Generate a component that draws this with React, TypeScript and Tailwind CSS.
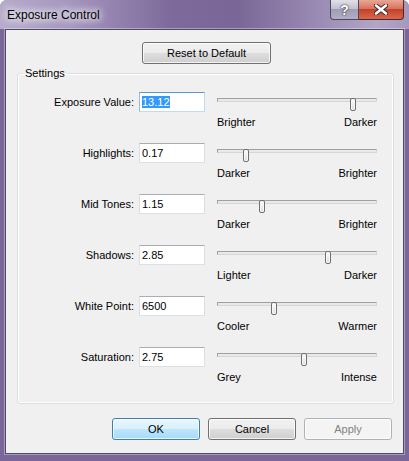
import React from "react";

type Setting = {
  label: string;
  value: string;
  thumb: number; // thumb offset along the 160px track
  low: string;
  high: string;
};

const settings: Setting[] = [
  { label: "Exposure Value:", value: "13.12", thumb: 133, low: "Brighter", high: "Darker" },
  { label: "Highlights:", value: "0.17", thumb: 26, low: "Darker", high: "Brighter" },
  { label: "Mid Tones:", value: "1.15", thumb: 42, low: "Darker", high: "Brighter" },
  { label: "Shadows:", value: "2.85", thumb: 108, low: "Lighter", high: "Darker" },
  { label: "White Point:", value: "6500", thumb: 54, low: "Cooler", high: "Warmer" },
  { label: "Saturation:", value: "2.75", thumb: 84, low: "Grey", high: "Intense" },
];

const btn =
  "h-[22px] rounded-[3px] border text-[11px] leading-[20px] shadow-[inset_0_0_0_1px_rgba(255,255,255,0.75)]";
const btnNormal =
  "border-[#707070] text-black bg-[linear-gradient(#f2f2f2_0%,#ebebeb_50%,#dddddd_51%,#cfcfcf_100%)]";

function TextBox({ value, focused }: { value: string; focused?: boolean }) {
  return (
    <div
      className={
        "ml-[5px] h-[20px] w-[66px] border bg-white pl-[2px] leading-[18px] " +
        (focused
          ? "border-[#c5daed] border-t-[#5a9ad6] border-l-[#8fbbe4]"
          : "border-[#dbdfe6] border-t-[#abadb3]")
      }
    >
      {focused ? <span className="bg-[#3399ff] text-white">{value}</span> : value}
    </div>
  );
}

function Slider({ thumb, low, high }: { thumb: number; low: string; high: string }) {
  return (
    <div className="ml-[12px] mt-[2px] w-[160px]">
      <div className="relative h-[13px]">
        <div className="mt-[4px] h-[4px] border border-[#d6d6d6] border-t-[#a0a0a0] border-l-[#a0a0a0] bg-[#e7eaea]" />
        <div
          className="absolute top-0 h-[13px] w-[6px] rounded-[2px] border border-[#707070] bg-[linear-gradient(#ffffff,#dcdcdc)] shadow-[inset_0_0_0_1px_#f7f7f7]"
          style={{ left: thumb }}
        />
      </div>
      <div className="mt-[5px] flex justify-between leading-[13px]">
        <span>{low}</span>
        <span>{high}</span>
      </div>
    </div>
  );
}

export default function App() {
  return (
    <div className="flex h-[461px] w-[409px] flex-col overflow-hidden rounded-t-[7px] bg-[#7a6699] font-['Liberation_Sans',Arial,sans-serif] text-[11px] text-black">
      {/* caption */}
      <div className="flex h-[29px] shrink-0 items-start justify-between bg-[linear-gradient(90deg,#b7abcb_0%,#a394bd_18%,#7d6a9b_42%,#7a6797_58%,#9a8bb4_78%,#b2a6c7_92%,#a698bd_100%)]">
        <span className="ml-[7px] mt-[7px] text-[12px] leading-[16px] text-black [text-shadow:0_0_6px_#fff,0_0_10px_#fff,0_0_14px_#fff]">
          Exposure Control
        </span>
        <div className="mr-[5px] flex h-[20px]">
          <div className="flex w-[29px] items-center justify-center rounded-bl-[4px] border border-t-0 border-[#4b4a5c] bg-[linear-gradient(#e1e0ea_0%,#c3c1d2_45%,#9f9cb4_50%,#b2afc4_100%)]">
            <span className="text-[14px] font-bold leading-none text-white [text-shadow:0_0_1px_#222,0_0_2px_#333]">?</span>
          </div>
          <div className="flex w-[45px] items-center justify-center rounded-br-[4px] border border-l-0 border-t-0 border-[#4b2a26] bg-[linear-gradient(#e9a796_0%,#d9745d_45%,#c6412a_50%,#d8674c_100%)]">
            <svg width="14" height="11" viewBox="0 0 14 11">
              <path d="M2 1.5 L12 9.5 M12 1.5 L2 9.5" stroke="#3b2a2a" strokeWidth="4.5" strokeLinecap="round" />
              <path d="M2 1.5 L12 9.5 M12 1.5 L2 9.5" stroke="#fff" strokeWidth="2.6" strokeLinecap="round" />
            </svg>
          </div>
        </div>
      </div>

      {/* client area */}
      <div className="mx-[5px] flex h-[425px] flex-col border border-[#4e4a60] bg-[#f0f0f0] shadow-[0_0_0_1px_rgba(255,255,255,0.35)]">
        <button className={`${btn} ${btnNormal} ml-[136px] mt-[12px] w-[129px]`}>Reset to Default</button>

        <fieldset className="ml-[11px] mt-[3px] w-[377px] rounded-[3px] border border-[#d5dfe5] pb-[5px] pt-[12px] shadow-[inset_0_0_0_1px_#fff]">
          <legend className="ml-[5px] px-[2px] leading-[13px]">Settings</legend>
          {settings.map((s, i) => (
            <div key={s.label} className="flex h-[51px] items-start">
              <span className="mt-[4px] w-[116px] text-right leading-[13px]">{s.label}</span>
              <TextBox value={s.value} focused={i === 0} />
              <Slider thumb={s.thumb} low={s.low} high={s.high} />
            </div>
          ))}
        </fieldset>

        <div className="mr-[11px] mt-[14px] flex justify-end gap-[8px]">
          <button className={`${btn} w-[88px] border-[#3c7fb1] text-black bg-[linear-gradient(#eaf6fd_0%,#d9f0fc_50%,#bee6fd_51%,#a7d9f5_100%)]`}>
            OK
          </button>
          <button className={`${btn} ${btnNormal} w-[88px]`}>Cancel</button>
          <button className={`${btn} w-[88px] border-[#adb2b5] bg-[#f4f4f4] text-[#838383]`}>Apply</button>
        </div>
      </div>
    </div>
  );
}
